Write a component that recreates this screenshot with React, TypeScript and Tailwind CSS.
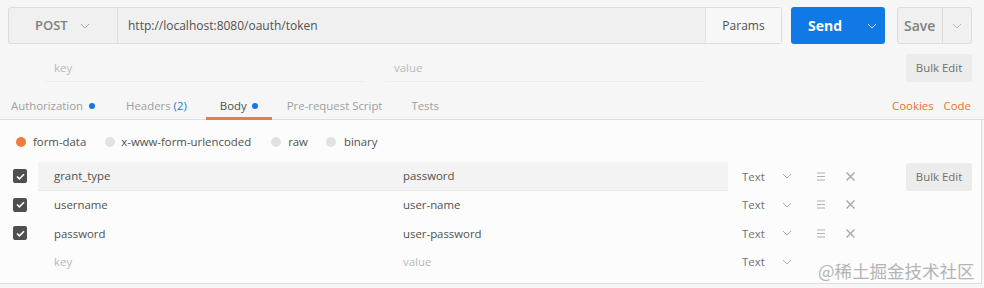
import React from "react";

const Chevron = ({ className = "" }: { className?: string }) => (
  <svg width="10" height="6" viewBox="0 0 10 6" className={className}>
    <path d="M1 1 L5 5 L9 1" fill="none" stroke="currentColor" strokeWidth="1" />
  </svg>
);

const Check = () => (
  <div className="w-[14px] h-[14px] rounded-[2px] bg-[#4f4f4f] flex items-center justify-center">
    <svg width="9" height="7" viewBox="0 0 9 7">
      <path d="M1 3.5 L3.4 5.8 L8 1.2" fill="none" stroke="#fff" strokeWidth="1.6" />
    </svg>
  </div>
);

const Bars = () => (
  <svg width="8" height="9" viewBox="0 0 8 9" className="text-[#b0b0b0]">
    <path d="M0 1 H8 M0 4.5 H8 M0 8 H8" stroke="currentColor" strokeWidth="1" />
  </svg>
);

const Cross = () => (
  <svg width="9" height="9" viewBox="0 0 9 9" className="text-[#a8a8a8]">
    <path d="M0.5 0.5 L8.5 8.5 M8.5 0.5 L0.5 8.5" stroke="currentColor" strokeWidth="1.4" />
  </svg>
);

type Row = { k: string; v: string; placeholder?: boolean; hover?: boolean; actions?: boolean };

const rows: Row[] = [
  { k: "grant_type", v: "password", hover: true, actions: true },
  { k: "username", v: "user-name", actions: true },
  { k: "password", v: "user-password", actions: true },
  { k: "key", v: "value", placeholder: true },
];

export default function App() {
  return (
    <div
      className="relative w-[984px] h-[288px] bg-[#f6f6f6] text-[11.4px] text-[#505050] overflow-hidden"
      style={{ fontFamily: '"Open Sans", "Liberation Sans", sans-serif' }}
    >
      {/* Top row */}
      <div className="flex pt-[7px] pl-[8px] h-[44px]">
        <div className="flex w-[774px] h-[37px] border border-[#dcdcdc] rounded-[3px] bg-[#f0f0f0]">
          <div className="w-[109px] flex items-center border-r border-[#dcdcdc] pl-[26px] gap-[12px] text-[#808080]">
            <span className="font-semibold text-[13px]">POST</span>
            <Chevron className="text-[#a8a8a8]" />
          </div>
          <div className="flex-1 flex items-center pl-[10px] text-[12px] text-[#505050]">
            http://localhost:8080/oauth/token
          </div>
          <div className="w-[76px] flex items-center justify-center border-l border-[#e2e2e2] bg-[#f7f7f7] text-[12px] text-[#505050]">
            Params
          </div>
        </div>
        <div className="ml-[9px] w-[94px] h-[37px] rounded-[3px] bg-[#1079e6] flex items-center text-white">
          <span className="ml-[17px] font-bold text-[14px]">Send</span>
          <Chevron className="ml-[25px] text-[#cfe2f8]" />
        </div>
        <div className="ml-[12px] w-[75px] h-[37px] rounded-[3px] border border-[#dcdcdc] bg-[#f0f0f0] flex items-center">
          <span className="ml-[6px] font-semibold text-[14px] text-[#808080] w-[38px]">Save</span>
          <div className="h-full border-l border-[#dcdcdc] flex-1 flex items-center justify-center">
            <Chevron className="text-[#b8b8b8]" />
          </div>
        </div>
      </div>

      {/* Header key/value row */}
      <div className="flex mt-[10px] h-[28px]">
        <div className="ml-[46px] w-[319px] border-b border-[#ececec] flex items-center pl-[8px] text-[#b8b8b8]">key</div>
        <div className="ml-[20px] w-[320px] border-b border-[#ececec] flex items-center pl-[9px] text-[#b8b8b8]">value</div>
        <div className="ml-auto mr-[12px] w-[66px] h-[28px] bg-[#ececec] rounded-[2px] flex items-center justify-center text-[#707070]">
          Bulk Edit
        </div>
      </div>

      {/* Tabs */}
      <div className="flex mt-[10px] h-[28px] border-b border-[#dedede] items-stretch">
        <div className="flex items-center pl-[11px] pr-[15px] text-[#a0a0a0] gap-[6px]">
          Authorization <span className="w-[6px] h-[6px] rounded-full bg-[#1079e6]" />
        </div>
        <div className="flex items-center pl-[16px] pr-[19px] text-[#a0a0a0]">
          Headers&nbsp;<span className="text-[#2a78c9]">(2)</span>
        </div>
        <div className="relative flex items-center px-[14px] gap-[5px] text-[#505050]">
          Body <span className="w-[6px] h-[6px] rounded-full bg-[#1079e6]" />
          <div className="absolute left-0 right-0 bottom-[-1px] h-[3px] bg-[#f07c3c]" />
        </div>
        <div className="flex items-center pl-[15px] pr-[15px] text-[#a0a0a0]">Pre-request Script</div>
        <div className="flex items-center px-[14px] text-[#a0a0a0]">Tests</div>
        <div className="ml-auto flex items-center gap-[10px] mr-[13px] text-[#e8702a]">
          <span>Cookies</span>
          <span>Code</span>
        </div>
      </div>

      {/* Body */}
      <div className="bg-[#fcfcfc] h-[164px] pt-[2px] border-b border-r border-[#dedede] mr-[2px]">
        <div className="flex items-center h-[40px] pl-[16px]">
          <span className="w-[10px] h-[10px] rounded-full bg-[#f07c3c]" />
          <span className="ml-[7px]">form-data</span>
          <span className="ml-[19px] w-[10px] h-[10px] rounded-full bg-[#e2e2e2]" />
          <span className="ml-[6px]">x-www-form-urlencoded</span>
          <span className="ml-[20px] w-[10px] h-[10px] rounded-full bg-[#e2e2e2]" />
          <span className="ml-[7px]">raw</span>
          <span className="ml-[18px] w-[10px] h-[10px] rounded-full bg-[#e2e2e2]" />
          <span className="ml-[8px]">binary</span>
        </div>
        <div className="relative">
          {rows.map((r, i) => (
            <div key={i} className="flex items-center h-[28.5px]">
              <div className="w-[38px] flex justify-center pl-[2px]">{!r.placeholder && <Check />}</div>
              <div
                className={`flex w-[690px] h-full items-center ${
                  r.hover ? "bg-[#f3f3f3] border-b border-[#e8e8e8]" : ""
                }`}
              >
                <div className={`w-[349px] pl-[16px] ${r.placeholder ? "text-[#b8b8b8]" : ""}`}>{r.k}</div>
                <div className={`pl-[16px] ${r.placeholder ? "text-[#b8b8b8]" : ""}`}>{r.v}</div>
              </div>
              <div className="ml-[14px] w-[34px] text-[#707070]">Text</div>
              <Chevron className="ml-[6px] text-[#b0b0b0]" />
              {r.actions && (
                <>
                  <div className="ml-[25px]">
                    <Bars />
                  </div>
                  <div className="ml-[21px]">
                    <Cross />
                  </div>
                </>
              )}
            </div>
          ))}
          <div className="absolute left-[906px] top-[1px] w-[66px] h-[28px] bg-[#ececec] rounded-[2px] flex items-center justify-center text-[#707070]">
            Bulk Edit
          </div>
        </div>
      </div>

      <div
        className="absolute left-[818px] top-[258px] text-[17.5px] text-[#b4b4b4]"
        style={{ fontFamily: '"Noto Sans CJK SC", serif' }}
      >
        @稀土掘金技术社区
      </div>
    </div>
  );
}
